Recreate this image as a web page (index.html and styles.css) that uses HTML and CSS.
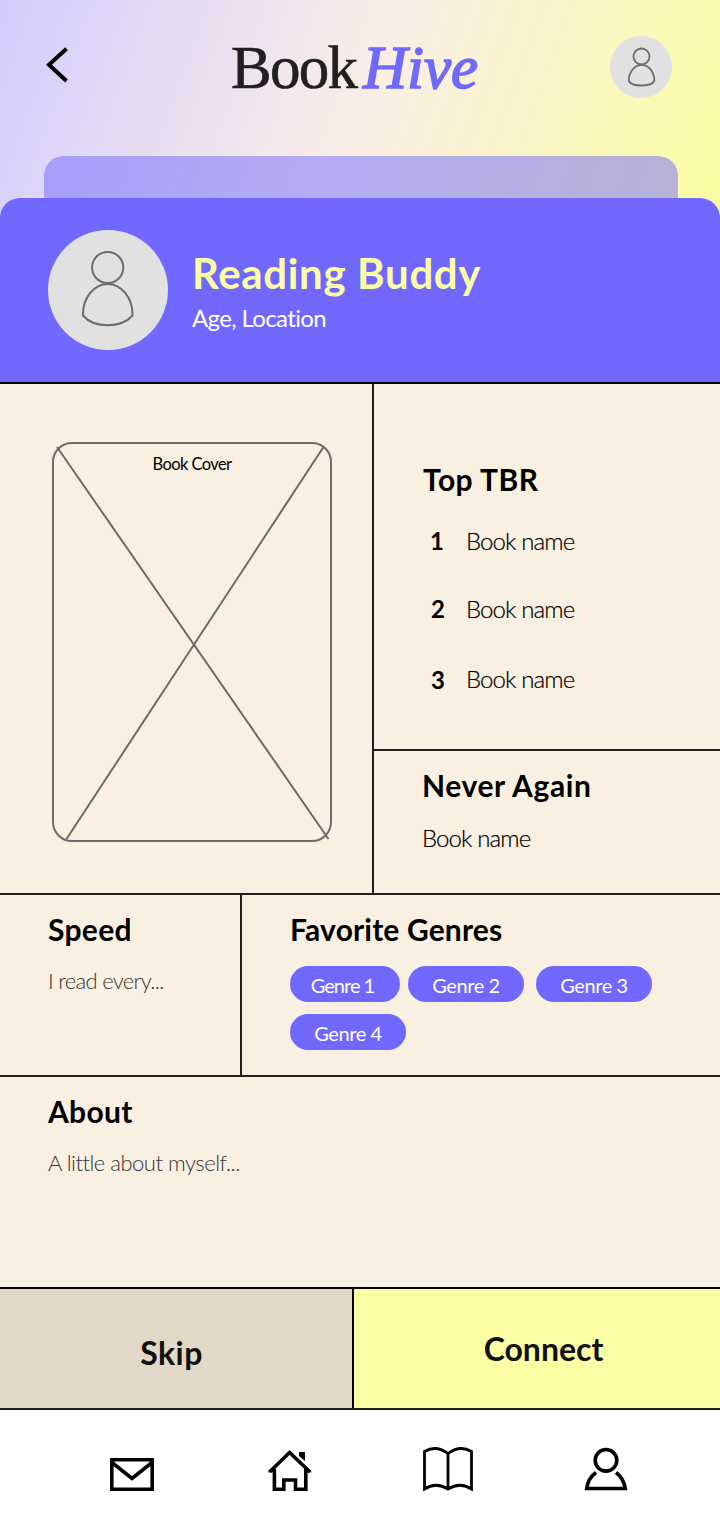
FILE: index.html
```html
<!DOCTYPE html>
<html lang="en">
<head>
<meta charset="utf-8">
<title>BookHive</title>
<link rel="stylesheet" href="styles.css">
</head>
<body>
<div class="app">
  <header class="top">
    <div class="bar">
      <svg class="back" width="24" height="36" viewBox="0 0 24 36"><path d="M21.500 1.800 4 17.700 21.500 34" fill="none" stroke="#000" stroke-width="4"/></svg>
      <h1 class="logo"><span class="logo-book">Book</span><span class="logo-hive">Hive</span></h1>
      <span class="avatar avatar-small">
        <svg width="62" height="62" viewBox="0 0 62 62" fill="none" stroke="#6b6b6b" stroke-width="1.800"><circle cx="31.500" cy="20.500" r="8"/><path d="M18.800 45C18.500 36 25 28.800 31.700 28.800S44.600 36 44.300 45C41 51 22 51 18.800 45Z"/></svg>
      </span>
    </div>
    <div class="next-card"></div>
  </header>
  <section class="profile">
    <span class="avatar avatar-large">
      <svg width="120" height="120" viewBox="0 0 120 120" fill="none" stroke="#6b6b6b" stroke-width="2"><circle cx="59.700" cy="37.500" r="15.600"/><path d="M35 85.500C34.500 68 46 54 59.700 54S85 68 84.500 85.500C73 98.500 46 98.500 35 85.500Z"/></svg>
    </span>
    <div class="who">
      <h2 class="name">Reading Buddy</h2>
      <p class="meta">Age, Location</p>
    </div>
  </section>
  <main class="details">
    <div class="row books">
      <div class="cover-cell">
        <div class="cover">
          <svg class="cross" width="280" height="400" viewBox="0 0 280 400" stroke="#6b6b6b" stroke-width="2"><path d="M5 5 276.500 397M271.500 5 14.500 397"/></svg>
          <span class="cover-label">Book Cover</span>
        </div>
      </div>
      <div class="lists">
        <section class="tbr">
          <h3 class="title t-tbr">Top TBR</h3>
          <ol class="tbr-list">
            <li class="item"><b class="num num-one">1</b><span class="book">Book name</span></li>
            <li class="item item-tall"><b class="num">2</b><span class="book">Book name</span></li>
            <li class="item item-last"><b class="num">3</b><span class="book">Book name</span></li>
          </ol>
        </section>
        <section class="never">
          <h3 class="title t-never">Never Again</h3>
          <p class="book">Book name</p>
        </section>
      </div>
    </div>
    <div class="row habits">
      <section class="speed">
        <h3 class="title t-speed">Speed</h3>
        <p class="hint h-speed">I read every...</p>
      </section>
      <section class="genres">
        <h3 class="title t-genres">Favorite Genres</h3>
        <div class="pills">
          <span class="pill pill-first">Genre 1</span><span class="pill">Genre 2</span><span class="pill">Genre 3</span><span class="pill">Genre 4</span>
        </div>
      </section>
    </div>
    <section class="about">
      <h3 class="title t-about">About</h3>
      <p class="hint h-about">A little about myself...</p>
    </section>
  </main>
  <div class="actions">
    <button class="action skip"><span>Skip</span></button>
    <button class="action connect"><span>Connect</span></button>
  </div>
  <nav class="tabs">
    <svg class="tab-mail" width="44" height="34" viewBox="0 0 44 34" fill="none" stroke="#000" stroke-width="3.600"><path d="M1.800 1.800H42.200V31.200H1.800ZM2 4.500 22 20.500 42 4.500"/></svg>
    <svg class="tab-home" width="46" height="42" viewBox="0 0 46 42" fill="none" stroke="#000" stroke-width="3.600"><path d="M2.500 22 22.600 2.500 43 22M7.400 19V39.200H16.800V30H28.500V39.200H38.800V19"/><path d="M32 2H38V11L32 6Z" fill="#000" stroke="none"/><path d="M.500 22.300H7V17ZM45 22.300H38.500V17Z" fill="#000" stroke="none"/></svg>
    <svg class="tab-book" width="50" height="44" viewBox="0 0 50 44" fill="none" stroke="#000" stroke-width="2.800"><path d="M1.500 42V4.500C9 0 17 .500 25 6.500 33 .500 41 0 48.500 4.500V42C41 37 33 37 25 42 17 37 9 37 1.500 42ZM25 6V42"/></svg>
    <svg class="tab-user" width="44" height="44" viewBox="0 0 44 44" fill="none" stroke="#000" stroke-width="3.600"><circle cx="22" cy="13.300" r="10.800"/><path d="M12 25.500C6 30 3.300 36 2.700 41.500H41.300C40.500 36 38 30 32 25.500"/></svg>
  </nav>
</div>
</body>
</html>
```
FILE: styles.css
```css
* { box-sizing: border-box; margin: 0; padding: 0; }
body { background: #fff; color: #000; font-family: Lato, "Liberation Sans", sans-serif; font-variant-ligatures: none; }
svg { display: block; flex: none; }
.app { width: 720px; height: 1520px; display: flex; flex-direction: column; overflow: hidden; background: linear-gradient(110deg, #d4ccff 0, #f9eee7 372px, #fbfda4 735px); }

.top { height: 198px; display: flex; flex-direction: column; }
.bar { height: 156px; padding: 36px 48px 0 45px; display: flex; align-items: flex-start; }
.back { margin-top: 11px; }
.logo { display: flex; margin-left: 162px; font: 400 61px/64px "Liberation Serif", serif; white-space: nowrap; color: #202020; }
.logo-book { width: 132px; letter-spacing: -1.700px; -webkit-text-stroke: .600px #202020; }
.logo-hive { width: 115px; font-style: italic; color: #7168ff; -webkit-text-stroke: 1.600px #7168ff; }
.next-card { height: 42px; margin: 0 42px 0 44px; border-radius: 20px 20px 0 0; background: rgba(113, 104, 255, .5); }
.avatar { flex: none; border-radius: 50%; background: #e1e1e1; }
.avatar-small { width: 62px; height: 62px; margin-left: auto; }
.avatar-large { width: 120px; height: 120px; }

.profile { height: 184px; padding: 32px 48px; display: flex; gap: 24px; border-radius: 20px 20px 0 0; background: #7168ff; }
.who { padding-top: 18px; }
.name { font-size: 42px; line-height: 50px; font-weight: 700; letter-spacing: .650px; color: #fcfea3; white-space: nowrap; }
.meta { margin-top: 6px; font-size: 24px; line-height: 28px; letter-spacing: -.650px; color: #fff; }

.details { height: 907px; border-top: 2px solid #000; border-bottom: 2px solid #000; background: #faf0e1; }
.row { display: flex; border-bottom: 2px solid #202020; }
.books { height: 511px; }
.cover-cell { width: 374px; padding: 58px 0 0 52px; border-right: 2px solid #202020; }
.cover { position: relative; width: 280px; height: 400px; border: 2px solid #6b6b6b; border-radius: 20px; text-align: center; }
.cross { position: absolute; left: -2px; top: -2px; }
.cover-label { display: block; padding-top: 10px; font-size: 16.500px; line-height: 20px; letter-spacing: -.600px; }
.lists { flex: 1; }
.title { font-size: 30px; line-height: 36px; font-weight: 700; white-space: nowrap; }
.t-tbr { letter-spacing: .500px; }
.t-never { letter-spacing: .600px; }
.t-speed { letter-spacing: .300px; }
.t-genres { letter-spacing: .150px; }
.t-about { letter-spacing: .300px; }
.tbr { height: 367px; padding: 77px 0 0 49px; border-bottom: 2px solid #202020; }
.tbr-list { padding-top: 28px; list-style: none; }
.item { height: 68px; display: flex; }
.item-tall { height: 70px; }
.num { width: 43px; padding-left: 8px; font-size: 24px; line-height: 32px; }
.num-one { padding-left: 7px; }
.item-last .num { padding-top: 1px; }
.book { font-size: 24px; line-height: 32px; font-weight: 300; letter-spacing: -.880px; -webkit-text-stroke: .200px #000; white-space: nowrap; }
.never { padding: 16px 0 0 48px; }
.never .book { margin-top: 19px; }

.habits { height: 182px; }
.speed { width: 242px; padding: 16px 0 0 48px; border-right: 2px solid #202020; }
.hint { margin-top: 19px; font-size: 22px; line-height: 30px; font-weight: 300; color: #333; white-space: nowrap; }
.h-speed { letter-spacing: -.700px; }
.h-about { letter-spacing: -.500px; }
.genres { flex: 1; padding: 16px 0 0 48px; }
.pills { padding-top: 19px; width: 380px; display: flex; flex-wrap: wrap; gap: 12px; }
.pill { width: 116px; height: 36px; border-radius: 18px; background: #7168ff; color: #fff; font-size: 20px; line-height: 38px; letter-spacing: -.400px; text-align: center; }
.pill-first { width: 110px; margin-right: -4px; padding-right: 5px; letter-spacing: -1px; }
.about { padding: 16px 0 0 48px; }

.actions { height: 121px; display: flex; border-bottom: 2px solid #202020; }
.action { border: 0; font: 700 32px/40px Lato, sans-serif; color: #111; }
.skip { width: 354px; padding: 8px 9px 0 0; letter-spacing: .500px; border-right: 2px solid #000; background: #e1d8c8; }
.connect { flex: 1; padding: 0 0 0 13px; background: #fcfea3; }

.tabs { height: 110px; padding-left: 110px; display: flex; align-items: flex-start; background: #fff; }
.tab-mail { margin-top: 48px; }
.tab-home { margin: 40px 0 0 113px; }
.tab-book { margin: 37px 0 0 110px; }
.tab-user { margin: 37px 0 0 111px; }
```
